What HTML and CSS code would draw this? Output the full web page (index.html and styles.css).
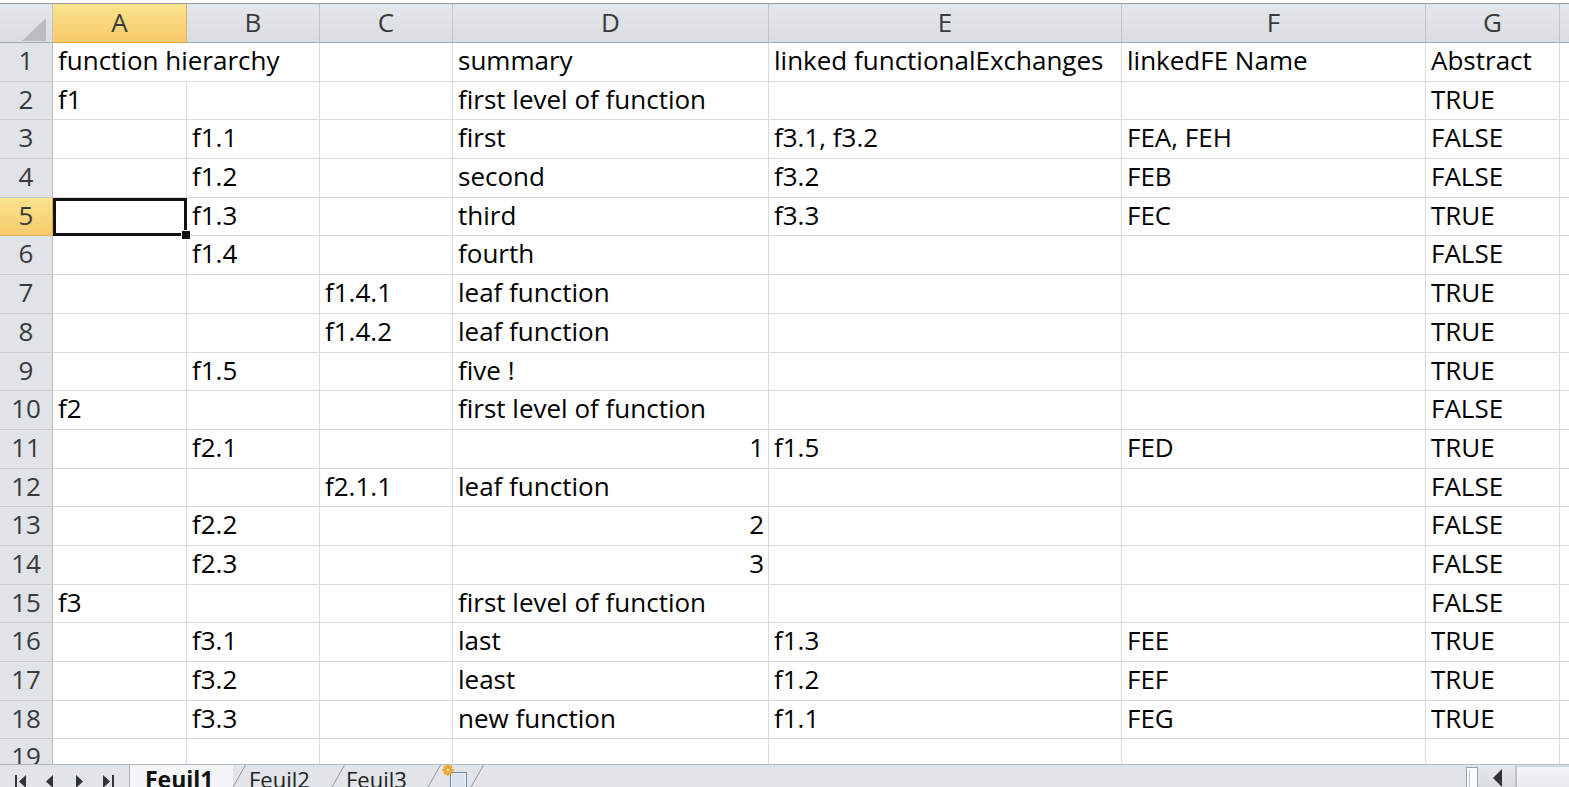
FILE: index.html
```html
<!DOCTYPE html>
<html>
<head>
<meta charset="utf-8">
<link rel="stylesheet" href="styles.css">
</head>
<body>
<div class="sheet">
  <div class="top"></div>
  <div class="grid">
    <div class="ch corner"><svg width="53" height="38" viewBox="0 0 53 38"><polygon points="22,37 46,37 46,14" fill="#b9bdc2"/></svg></div>
    <div class="ch sel">A</div><div class="ch">B</div><div class="ch">C</div><div class="ch">D</div><div class="ch">E</div><div class="ch">F</div><div class="ch">G</div><div class="ch"></div>

    <div class="rh">1</div><div class="c nb">function hierarchy</div><div class="c"></div><div class="c"></div><div class="c">summary</div><div class="c">linked functionalExchanges</div><div class="c">linkedFE Name</div><div class="c">Abstract</div><div class="c"></div>
    <div class="rh">2</div><div class="c">f1</div><div class="c"></div><div class="c"></div><div class="c">first level of function</div><div class="c"></div><div class="c"></div><div class="c">TRUE</div><div class="c"></div>
    <div class="rh">3</div><div class="c"></div><div class="c">f1.1</div><div class="c"></div><div class="c">first</div><div class="c">f3.1, f3.2</div><div class="c">FEA, FEH</div><div class="c">FALSE</div><div class="c"></div>
    <div class="rh">4</div><div class="c"></div><div class="c">f1.2</div><div class="c"></div><div class="c">second</div><div class="c">f3.2</div><div class="c">FEB</div><div class="c">FALSE</div><div class="c"></div>
    <div class="rh sel">5</div><div class="c active"></div><div class="c">f1.3</div><div class="c"></div><div class="c">third</div><div class="c">f3.3</div><div class="c">FEC</div><div class="c">TRUE</div><div class="c"></div>
    <div class="rh">6</div><div class="c"></div><div class="c">f1.4</div><div class="c"></div><div class="c">fourth</div><div class="c"></div><div class="c"></div><div class="c">FALSE</div><div class="c"></div>
    <div class="rh">7</div><div class="c"></div><div class="c"></div><div class="c">f1.4.1</div><div class="c">leaf function</div><div class="c"></div><div class="c"></div><div class="c">TRUE</div><div class="c"></div>
    <div class="rh">8</div><div class="c"></div><div class="c"></div><div class="c">f1.4.2</div><div class="c">leaf function</div><div class="c"></div><div class="c"></div><div class="c">TRUE</div><div class="c"></div>
    <div class="rh">9</div><div class="c"></div><div class="c">f1.5</div><div class="c"></div><div class="c">five !</div><div class="c"></div><div class="c"></div><div class="c">TRUE</div><div class="c"></div>
    <div class="rh">10</div><div class="c">f2</div><div class="c"></div><div class="c"></div><div class="c">first level of function</div><div class="c"></div><div class="c"></div><div class="c">FALSE</div><div class="c"></div>
    <div class="rh">11</div><div class="c"></div><div class="c">f2.1</div><div class="c"></div><div class="c num">1</div><div class="c">f1.5</div><div class="c">FED</div><div class="c">TRUE</div><div class="c"></div>
    <div class="rh">12</div><div class="c"></div><div class="c"></div><div class="c">f2.1.1</div><div class="c">leaf function</div><div class="c"></div><div class="c"></div><div class="c">FALSE</div><div class="c"></div>
    <div class="rh">13</div><div class="c"></div><div class="c">f2.2</div><div class="c"></div><div class="c num">2</div><div class="c"></div><div class="c"></div><div class="c">FALSE</div><div class="c"></div>
    <div class="rh">14</div><div class="c"></div><div class="c">f2.3</div><div class="c"></div><div class="c num">3</div><div class="c"></div><div class="c"></div><div class="c">FALSE</div><div class="c"></div>
    <div class="rh">15</div><div class="c">f3</div><div class="c"></div><div class="c"></div><div class="c">first level of function</div><div class="c"></div><div class="c"></div><div class="c">FALSE</div><div class="c"></div>
    <div class="rh">16</div><div class="c"></div><div class="c">f3.1</div><div class="c"></div><div class="c">last</div><div class="c">f1.3</div><div class="c">FEE</div><div class="c">TRUE</div><div class="c"></div>
    <div class="rh">17</div><div class="c"></div><div class="c">f3.2</div><div class="c"></div><div class="c">least</div><div class="c">f1.2</div><div class="c">FEF</div><div class="c">TRUE</div><div class="c"></div>
    <div class="rh">18</div><div class="c"></div><div class="c">f3.3</div><div class="c"></div><div class="c">new function</div><div class="c">f1.1</div><div class="c">FEG</div><div class="c">TRUE</div><div class="c"></div>
    <div class="rh">19</div><div class="c"></div><div class="c"></div><div class="c"></div><div class="c"></div><div class="c"></div><div class="c"></div><div class="c"></div><div class="c"></div>
  </div>
  <div class="tabbar">
    <div class="nav">
      <svg width="12" height="14" viewBox="0 0 12 14"><rect x="0" y="1" width="2" height="13" fill="#333"/><polygon points="11,1 4,7.5 11,14" fill="#333"/></svg>
      <svg width="10" height="14" viewBox="0 0 10 14"><polygon points="8,1 1,7.5 8,14" fill="#333"/></svg>
      <svg width="10" height="14" viewBox="0 0 10 14"><polygon points="2,1 9,7.5 2,14" fill="#333"/></svg>
      <svg width="12" height="14" viewBox="0 0 12 14"><polygon points="1,1 8,7.5 1,14" fill="#333"/><rect x="10" y="1" width="2" height="13" fill="#333"/></svg>
    </div>
    <div class="tab tab-active">Feuil1</div>
    <svg class="slant" width="14" height="23" viewBox="0 0 14 23"><line x1="0.5" y1="23" x2="13.5" y2="0" stroke="#8f969e" stroke-width="1"/></svg>
    <div class="tab tab2">Feuil2</div>
    <svg class="slant" width="14" height="23" viewBox="0 0 14 23"><line x1="0.5" y1="23" x2="13.5" y2="0" stroke="#8f969e" stroke-width="1"/></svg>
    <div class="tab tab3">Feuil3</div>
    <svg class="slant" width="14" height="23" viewBox="0 0 14 23"><line x1="0.5" y1="23" x2="13.5" y2="0" stroke="#8f969e" stroke-width="1"/></svg>
    <div class="newsheet">
      <svg width="30" height="23" viewBox="0 0 30 23"><rect x="9.5" y="7.5" width="16" height="16" fill="#eef2f8" stroke="#6d86a8"/><rect x="11" y="9" width="13" height="13" fill="#d9e3f0"/><g fill="#f0a020"><circle cx="7" cy="5" r="3.2"/><circle cx="7" cy="0.8" r="1.6"/><circle cx="7" cy="9.2" r="1.6"/><circle cx="2.8" cy="5" r="1.6"/><circle cx="11.2" cy="5" r="1.6"/><circle cx="4" cy="2" r="1.4"/><circle cx="10" cy="2" r="1.4"/><circle cx="4" cy="8" r="1.4"/><circle cx="10" cy="8" r="1.4"/></g><circle cx="7" cy="5" r="1.5" fill="#fff3c0"/></svg>
    </div>
    <svg class="slant" width="14" height="23" viewBox="0 0 14 23"><line x1="0.5" y1="23" x2="13.5" y2="0" stroke="#8f969e" stroke-width="1"/></svg>
    <div class="spacer"></div>
    <div class="splitter"><div class="splitter-in"></div></div>
    <div class="sbtn"><svg width="12" height="20" viewBox="0 0 12 20"><polygon points="11,2 2,11 11,20" fill="#333"/></svg></div>
    <div class="track"></div>
  </div>
</div>
</body>
</html>
```
FILE: styles.css
```css
* { box-sizing: border-box; }
body { margin: 0; background: #fff; font-family: "Open Sans", "Noto Sans", sans-serif; }

.sheet {
  width: 1569px;
  height: 787px;
  display: flex;
  flex-direction: column;
  overflow: hidden;
}

.top {
  height: 4px;
  flex: none;
  background: #fff;
  border-bottom: 1px solid #9a9a9a;
}

.grid {
  flex: 1;
  min-height: 0;
  display: grid;
  grid-template-columns: 53px 134px 133px 133px 316px 353px 304px 134px 1fr;
  grid-template-rows: 39px;
  grid-auto-rows: 38.7px;
  align-content: start;
  overflow: hidden;
}

.ch {
  background: linear-gradient(#e3e6ea, #dadee3);
  border-right: 1px solid #c2c6cb;
  border-bottom: 1px solid #a3a9b0;
  text-align: center;
  font-size: 26px;
  line-height: 34px;
  padding-top: 1px;
  color: #3a3a3a;
}

.corner { padding: 0; line-height: 0; }
.corner svg { display: block; }

.ch.sel {
  background: linear-gradient(#fce48f, #f6c96a);
  border-bottom-color: #e6a63a;
  border-right-color: #e0b060;
}

.rh {
  background: #e0e3e8;
  border-right: 1px solid #b8bdc3;
  border-bottom: 1px solid #c9cdd2;
  text-align: center;
  font-size: 26px;
  line-height: 34px;
  color: #3a3a3a;
}

.rh.sel {
  background: linear-gradient(#fce48f, #f6c96a);
  border-right-color: #e6a63a;
  border-bottom-color: #e0b060;
}

.c {
  border-right: 1px solid #dadcdd;
  border-bottom: 1px solid #dadcdd;
  padding: 0 5px;
  font-size: 26px;
  line-height: 34px;
  white-space: nowrap;
  color: #000;
}

.c.nb { border-right-color: transparent; overflow: visible; }
.c.num { text-align: right; padding-right: 4px; }

.c.active {
  position: relative;
  border: none;
  box-shadow: inset 0 0 0 3px #111;
}
.c.active::after {
  content: "";
  position: absolute;
  right: -4px;
  bottom: -4px;
  width: 8px;
  height: 8px;
  background: #111;
  border: 1px solid #fff;
}

.tabbar {
  flex: none;
  height: 23px;
  display: flex;
  align-items: stretch;
  background: #e1e4e8;
  border-top: 1px solid #b4b9bf;
  overflow: hidden;
}

.nav {
  width: 130px;
  flex: none;
  display: flex;
  align-items: flex-start;
  justify-content: space-around;
  padding: 9px 6px 0;
  border-right: 1px solid #b0b5bb;
}
.nav svg { display: block; }

.tab {
  flex: none;
  font-size: 22px;
  line-height: 22px;
  padding-top: 3px;
  color: #222;
  white-space: nowrap;
}
.tab-active {
  width: 103px;
  padding-left: 15px;
  font-weight: 700;
  font-size: 23px;
  background: #f3f4f6;
  color: #111;
}
.tab2 { width: 86px; padding-left: 3px; }
.tab3 { width: 83px; padding-left: 1px; }

.slant { flex: none; display: block; margin-left: -1px; }

.newsheet { flex: none; width: 30px; }
.newsheet svg { display: block; }

.spacer { flex: 1; }

.splitter {
  width: 12px;
  flex: none;
  background: #fff;
  border: 1px solid #9aa0a7;
  border-bottom: none;
  margin-top: 2px;
  padding: 2px 2px 0;
}
.splitter-in { height: 100%; border-left: 1px solid #c0c4c9; }

.sbtn {
  width: 38px;
  flex: none;
  display: flex;
  justify-content: center;
  padding-top: 2px;
  background: linear-gradient(#e6e9ed, #d8dce1);
  border-right: 1px solid #c0c5cb;
}
.sbtn svg { display: block; }

.track {
  width: 53px;
  flex: none;
  background: linear-gradient(#f3f5f7, #e9ecef);
  border-left: 1px solid #b9bec4;
  border-top: 1px solid #c6cbd0;
  margin-top: 1px;
}
```
